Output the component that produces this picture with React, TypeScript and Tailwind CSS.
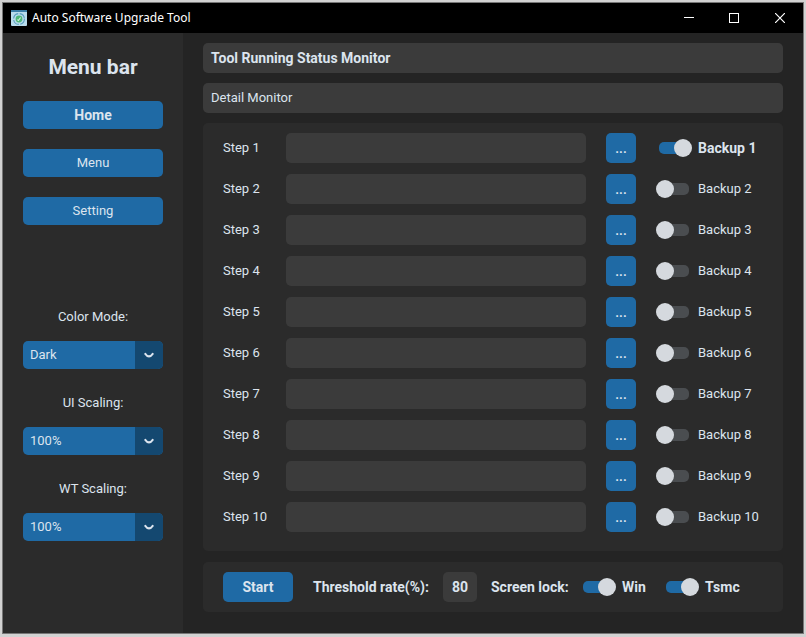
import { useState } from "react";

const steps = [1, 2, 3, 4, 5, 6, 7, 8, 9, 10];

function Switch({ id, on }: { id: string; on?: boolean }) {
  return (
    <input
      id={id}
      type="checkbox"
      role="switch"
      defaultChecked={on}
      className="relative h-[18px] w-9 shrink-0 appearance-none before:absolute before:inset-x-[3px] before:inset-y-[3px] before:rounded-[5px] before:bg-[#4a4d50] after:absolute after:left-0 after:top-0 after:size-[18px] after:rounded-full after:bg-[#d5d9de] checked:before:bg-[#1f6aa5] checked:after:left-[18px]"
    />
  );
}

function Picker({ id, label, value, options }: { id: string; label: string; value: string; options: string[] }) {
  return (
    <div className="flex flex-col gap-2.5">
      <label htmlFor={id} className="text-center leading-7">
        {label}
      </label>
      <div className="relative">
        <select
          id={id}
          defaultValue={value}
          className="block h-7 w-full appearance-none rounded-[5px] bg-[#1f6aa5] pr-8 pl-[7px] outline-none"
        >
          {options.map((o) => (
            <option key={o}>{o}</option>
          ))}
        </select>
        <span className="pointer-events-none absolute inset-y-0 right-0 flex w-7 items-center justify-center rounded-r-[5px] bg-[#144870]">
          <svg width="10" height="6" viewBox="0 0 10 6" fill="none" stroke="#dce4ee" strokeWidth="2.2" strokeLinecap="round" strokeLinejoin="round">
            <path d="M1.4 2 Q3 4.4 5 4.4 Q7 4.4 8.6 2" />
          </svg>
        </span>
      </div>
    </div>
  );
}

function AppIcon() {
  return (
    <svg width="16" height="16" viewBox="0 0 16 16" fill="none">
      <rect width="16" height="16" rx="1" fill="#b9dcec" />
      <rect width="16" height="2" fill="#3c7fa8" />
      <circle cx="8" cy="9" r="5.4" stroke="#5aa0bf" strokeWidth="1.1" strokeDasharray="7 1.5" />
      <circle cx="8" cy="9" r="3.4" fill="#4fb878" />
      <path d="m6.4 9.6 1 .9 2.2-3" stroke="#d8f5e2" strokeWidth="1.1" />
    </svg>
  );
}

function TitleBar() {
  return (
    <header className="flex h-[30px] items-center bg-black pl-2 text-white">
      <AppIcon />
      <h1 className="ml-[5px] flex-1 font-['Noto_Sans',sans-serif] text-[12px]">Auto Software Upgrade Tool</h1>
      <button aria-label="Minimize" className="flex h-full w-11 items-center justify-center">
        <svg width="10" height="10" viewBox="0 0 10 10" stroke="currentColor" shapeRendering="crispEdges">
          <path d="M0 4.5h10" />
        </svg>
      </button>
      <button aria-label="Maximize" className="flex h-full w-[46px] items-center justify-center">
        <svg width="10" height="10" viewBox="0 0 10 10" fill="none" stroke="currentColor" shapeRendering="crispEdges">
          <path d="M.5.5h9v9h-9z" />
        </svg>
      </button>
      <button aria-label="Close" className="flex h-full w-[46px] items-center justify-center">
        <svg width="10" height="10" viewBox="0 0 10 10" stroke="currentColor" strokeWidth="1.2">
          <path d="m0 0 10 10M10 0 0 10" />
        </svg>
      </button>
    </header>
  );
}

function Sidebar() {
  return (
    <aside className="w-[180px] shrink-0 bg-[#2b2b2b] p-5">
      <h2 className="text-center text-[21px] leading-7 font-bold">Menu bar</h2>
      <nav className="mt-5 flex flex-col gap-5">
        <button className="h-7 rounded-[5px] bg-[#1f6aa5] text-sm font-bold">Home</button>
        <button className="h-7 rounded-[5px] bg-[#1f6aa5]">Menu</button>
        <button className="h-7 rounded-[5px] bg-[#1f6aa5]">Setting</button>
      </nav>
      <div className="mt-[78px] flex flex-col gap-5">
        <Picker id="color-mode" label="Color Mode:" value="Dark" options={["Light", "Dark", "System"]} />
        <Picker id="ui-scaling" label="UI Scaling:" value="100%" options={["80%", "90%", "100%", "110%", "120%"]} />
        <Picker id="wt-scaling" label="WT Scaling:" value="100%" options={["80%", "90%", "100%", "110%", "120%"]} />
      </div>
    </aside>
  );
}

function StepRow({ n }: { n: number }) {
  return (
    <div className="flex h-[30px] items-center">
      <label htmlFor={`step-${n}`} className="w-[63px]">
        Step {n}
      </label>
      <input id={`step-${n}`} type="text" className="h-full min-w-0 flex-1 rounded-[5px] bg-[#3b3b3b] px-2 outline-none" />
      <button aria-label={`Browse for step ${n}`} className="mx-5 size-[30px] rounded-[5px] bg-[#1f6aa5] pt-0.5 font-bold">
        ...
      </button>
      <Switch id={`backup-${n}`} on={n === 1} />
      <label htmlFor={`backup-${n}`} className={n === 1 ? "ml-1.5 w-[65px] text-sm font-bold" : "ml-1.5 w-[65px]"}>
        Backup {n}
      </label>
    </div>
  );
}

export default function App() {
  const [rate, setRate] = useState("80");
  return (
    <div className="flex min-h-screen flex-col bg-[#d2d2d2] px-[2px] pt-[2px] pb-[3px] font-[Roboto,sans-serif] text-[13px] text-[#dce4ee]">
      <div className="flex flex-1 flex-col border border-[#777777] bg-[#242424]">
        <TitleBar />
        <div className="flex flex-1">
          <Sidebar />
          <main className="flex min-w-0 flex-1 flex-col px-5 pt-2.5 pb-5">
            <div className="rounded-[5px] bg-[#3b3b3b] px-2 text-sm leading-[30px] font-bold">Tool Running Status Monitor</div>
            <div className="mt-2.5 rounded-[5px] bg-[#3b3b3b] px-2 leading-[30px]">Detail Monitor</div>
            <section className="mt-2.5 flex flex-col gap-[11px] rounded-[5px] bg-[#2b2b2b] px-5 pt-2.5 pb-[19px]">
              {steps.map((n) => (
                <StepRow key={n} n={n} />
              ))}
            </section>
            <section className="mt-[11px] flex h-[50px] items-center rounded-[5px] bg-[#2b2b2b] px-5 text-sm font-bold">
              <button className="h-[30px] w-[70px] rounded-[5px] bg-[#1f6aa5]">Start</button>
              <label htmlFor="rate" className="ml-5 w-[130px]">
                Threshold rate(%):
              </label>
              <input
                id="rate"
                value={rate}
                onChange={(e) => setRate(e.target.value)}
                className="h-[30px] w-[34px] rounded-[5px] bg-[#3b3b3b] text-center outline-none"
              />
              <span className="ml-3.5 w-[89px]">Screen lock:</span>
              <Switch id="lock-win" on />
              <label htmlFor="lock-win" className="ml-1.5 w-[41px]">
                Win
              </label>
              <Switch id="lock-tsmc" on />
              <label htmlFor="lock-tsmc" className="ml-1.5">
                Tsmc
              </label>
            </section>
          </main>
        </div>
      </div>
    </div>
  );
}
